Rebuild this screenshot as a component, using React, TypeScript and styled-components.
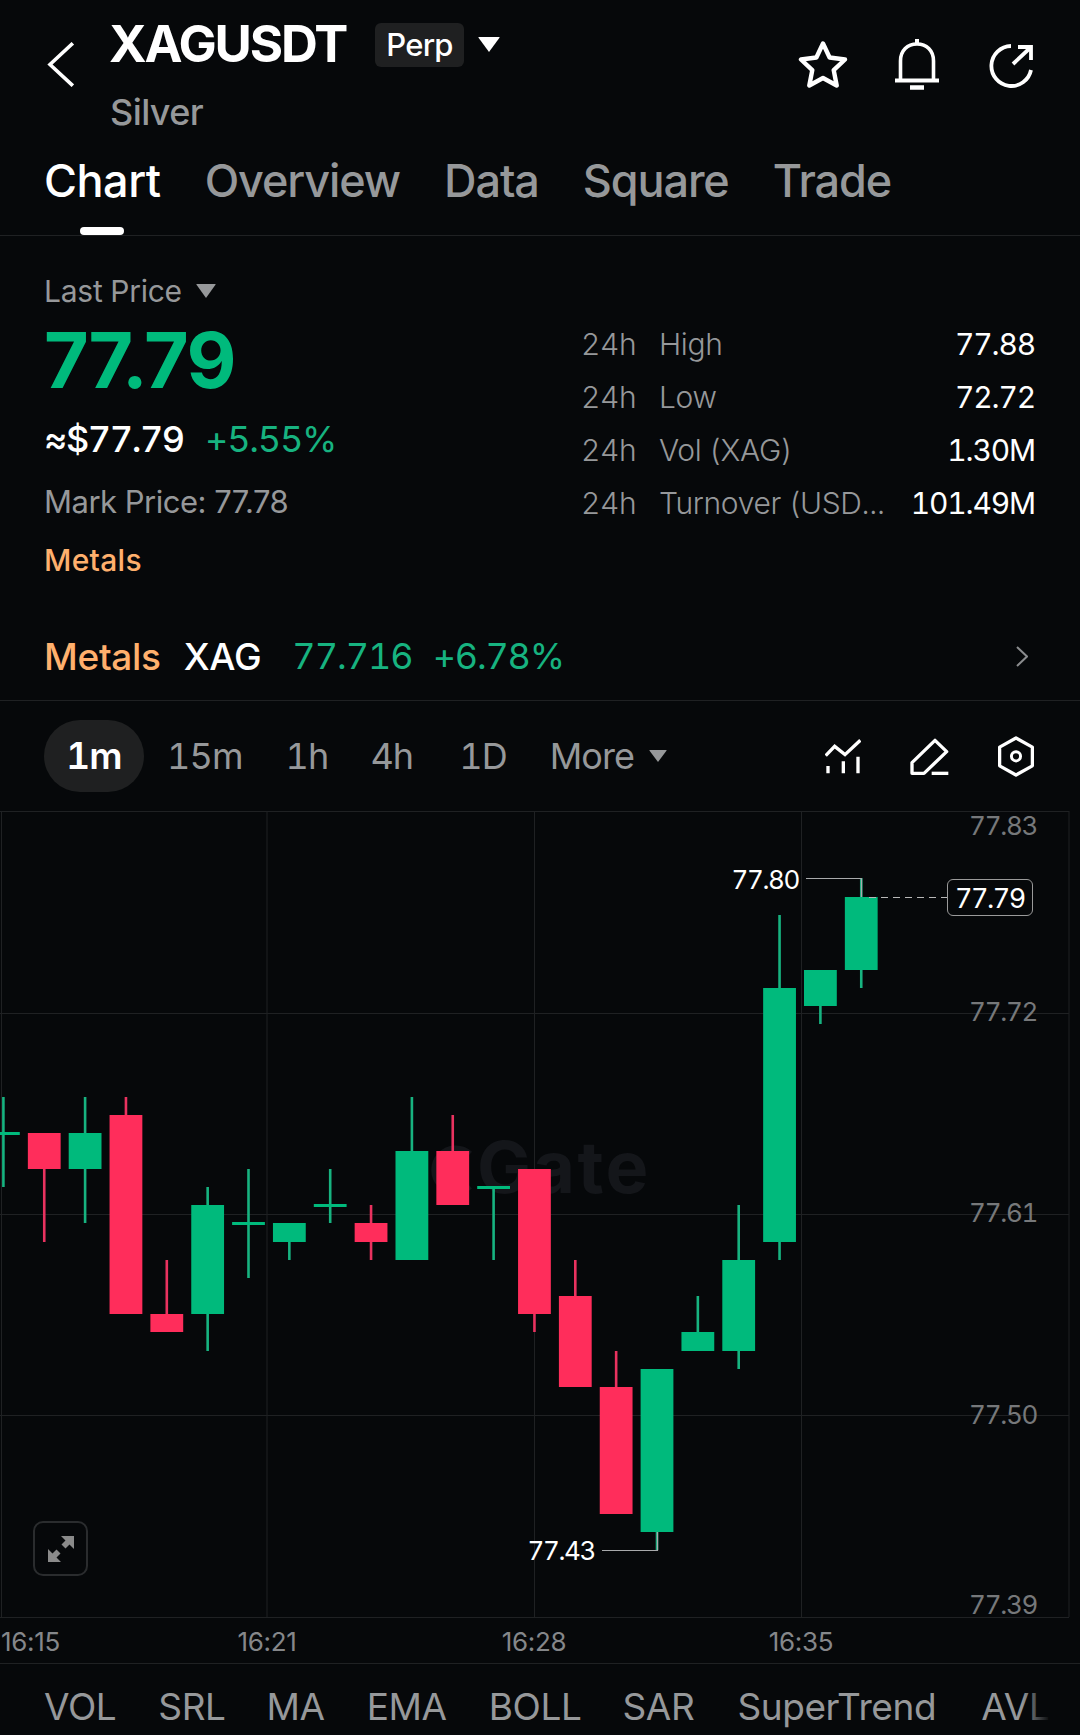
import React from "react";
import styled, { createGlobalStyle } from "styled-components";

const Global = createGlobalStyle`
  html, body { margin: 0; padding: 0; background: #06080a; }
  * { box-sizing: border-box; }
`;

const GREEN = "#00ba7c";
const GREEN_W = "#17b380";
const RED = "#ff2d5b";
const RED_W = "#e9325f";
const GRAY = "#96989a";
const LINE = "#1f2123";

const Page = styled.div`
  width: 1080px;
  height: 1735px;
  overflow: hidden;
  background: #06080a;
  color: #fff;
  font-family: Inter, "Liberation Sans", sans-serif;
  font-variant-numeric: tabular-nums;
  display: flex;
  flex-direction: column;
`;

const Header = styled.header`
  height: 130px;
  padding: 20px 47px 0 47px;
  display: flex;
  align-items: flex-start;
`;
const BackBtn = styled.svg`
  width: 27px;
  height: 45px;
  margin: 22px 36px 0 0;
  flex: none;
`;
const TitleCol = styled.div`
  display: flex;
  flex-direction: column;
`;
const TitleRow = styled.div`
  display: flex;
  align-items: center;
  height: 46px;
`;
const Title = styled.h1`
  margin: 2px 0 0 -1px;
  font-size: 51px;
  line-height: 46px;
  font-weight: 700;
  letter-spacing: -2.1px;
  width: 266px;
`;
const Tag = styled.span`
  width: 89px;
  height: 44px;
  margin-top: 4px;
  border-radius: 6px;
  background: #1f2021;
  font-size: 31px;
  line-height: 44px;
  font-weight: 500;
  letter-spacing: -0.7px;
  text-align: center;
`;
const Caret = styled.span<{ $w: number; $h: number; $c: string }>`
  flex: none;
  width: 0;
  height: 0;
  border-left: ${(p) => p.$w / 2}px solid transparent;
  border-right: ${(p) => p.$w / 2}px solid transparent;
  border-top: ${(p) => p.$h}px solid ${(p) => p.$c};
  border-radius: 1px;
`;
const TitleCaret = styled(Caret)`
  margin: 3px 0 0 14px;
`;
const Sub = styled.div`
  margin-top: 28px;
  font-size: 36px;
  line-height: 36px;
  font-weight: 500;
  color: ${GRAY};
  letter-spacing: -0.6px;
`;
const HeadIcons = styled.div`
  margin: 19px 0 0 auto;
  display: flex;
  align-items: flex-start;
`;
const HeadIcon = styled.svg<{ $ml: number; $mt: number }>`
  display: block;
  margin-left: ${(p) => p.$ml}px;
  margin-top: ${(p) => p.$mt}px;
`;

const Tabs = styled.nav`
  height: 106px;
  padding: 26px 0 0 44px;
  display: flex;
  border-bottom: 1px solid ${LINE};
`;
const Tab = styled.div<{ $active?: boolean }>`
  position: relative;
  height: 79px;
  margin-right: 44px;
  font-size: 45px;
  line-height: 50px;
  font-weight: 500;
  letter-spacing: ${(p) => (p.$active ? "-0.5px" : "-1.1px")};
  color: ${(p) => (p.$active ? "#fff" : GRAY)};
  ${(p) =>
    p.$active &&
    `&::after { content: ""; position: absolute; left: 36px; bottom: 0; width: 44px; height: 8px; border-radius: 4px; background: #fff; }`}
`;

const Stats = styled.section`
  height: 376px;
  display: flex;
`;
const Left = styled.div`
  width: 537px;
  padding: 35px 0 0 44px;
`;
const LastRow = styled.div`
  display: flex;
  align-items: center;
  height: 40px;
  font-size: 30px;
  color: ${GRAY};
  letter-spacing: -0.25px;
  font-weight: 400;
`;
const LastCaret = styled(Caret)`
  margin-left: 14px;
`;
const Price = styled.div`
  margin-top: 9px;
  font-size: 77px;
  line-height: 80px;
  font-weight: 700;
  font-variant-numeric: normal;
  letter-spacing: -1.7px;
  color: ${GREEN};
`;
const ApproxRow = styled.div`
  margin-top: 19px;
  display: flex;
  font-size: 36px;
  line-height: 40px;
`;
const Approx = styled.span`
  width: 161px;
  font-weight: 500;
  letter-spacing: -1.4px;
`;
const Pct = styled.span`
  color: ${GREEN_W};
  letter-spacing: -1.2px;
`;
const Mark = styled.div`
  margin-top: 23px;
  font-size: 31px;
  line-height: 40px;
  color: ${GRAY};
  font-variant-numeric: normal;
  letter-spacing: -0.5px;
  font-weight: 400;
`;
const MetalsTag = styled.div`
  margin-top: 18px;
  font-size: 30px;
  line-height: 40px;
  color: #ffb06d;
  font-weight: 500;
  letter-spacing: 0.3px;
`;
const Right = styled.div`
  flex: 1;
  padding: 81px 45px 0 44px;
`;
const StatRow = styled.div`
  height: 53px;
  display: flex;
  align-items: center;
  font-size: 30px;
  color: ${GRAY};
  letter-spacing: -0.35px;
  font-weight: 300;
`;
const Period = styled.span`
  width: 78px;
  flex: none;
`;
const StatLabel = styled.span`
  flex: 1;
  white-space: nowrap;
`;
const StatValue = styled.span`
  color: #fff;
  font-weight: 400;
  letter-spacing: -1.15px;
`;

const Ticker = styled.div`
  height: 89px;
  padding: 0 52px 0 44px;
  display: flex;
  align-items: center;
  border-bottom: 1px solid ${LINE};
  font-size: 37px;
  letter-spacing: -0.3px;
`;
const TickMetals = styled.span`
  color: #ffb06d;
  font-weight: 500;
  margin-right: 23px;
`;
const TickName = styled.span`
  font-weight: 500;
  margin-right: 31px;
`;
const TickPrice = styled.span`
  color: ${GREEN_W};
  font-size: 36px;
  letter-spacing: -1px;
  margin-right: 20px;
`;
const TickPct = styled.span`
  color: ${GREEN_W};
  font-size: 36px;
  letter-spacing: -1.2px;
`;
const TickChevron = styled.svg`
  margin-left: auto;
`;

const TimeBar = styled.div`
  height: 110px;
  padding: 0 46px 0 44px;
  display: flex;
  align-items: center;
`;
const Pill = styled.div`
  width: 100px;
  height: 72px;
  border-radius: 36px;
  background: #1f2021;
  font-size: 37px;
  line-height: 72px;
  text-align: center;
  font-weight: 600;
  letter-spacing: -0.8px;
`;
const TF = styled.div<{ $ml: number }>`
  margin-left: ${(p) => p.$ml}px;
  font-size: 36px;
  color: ${GRAY};
  letter-spacing: -0.9px;
`;
const TFCaret = styled(Caret)`
  margin-left: 15px;
`;
const TFIcons = styled.div`
  margin-left: auto;
  display: flex;
  align-items: center;
`;
const TFIcon = styled.svg<{ $ml: number }>`
  margin-left: ${(p) => p.$ml}px;
  display: block;
`;

const Chart = styled.div`
  position: relative;
  height: 807px;
`;
const ChartSvg = styled.svg`
  position: absolute;
  inset: 0;
`;
const Watermark = styled.div`
  position: absolute;
  left: 477px;
  top: 320px;
  font-size: 72px;
  line-height: 72px;
  font-weight: 700;
  letter-spacing: 2.3px;
  color: #14161a;
`;
const WatermarkLogo = styled.svg`
  position: absolute;
  left: 431px;
  top: 334px;
`;
const AxisPrice = styled.div<{ $top: number }>`
  position: absolute;
  right: 43px;
  top: ${(p) => p.$top}px;
  font-size: 26px;
  line-height: 30px;
  color: #76787a;
  letter-spacing: -1.3px;
`;
const ExtremeLabel = styled.div<{ $top: number; $right: number }>`
  position: absolute;
  right: ${(p) => p.$right}px;
  top: ${(p) => p.$top}px;
  font-size: 26px;
  line-height: 30px;
  color: #fff;
  letter-spacing: -1.4px;
`;
const LastTag = styled.div`
  position: absolute;
  left: 947px;
  top: 68px;
  width: 86px;
  height: 37px;
  border: 1px solid #9a9a9a;
  border-radius: 6px;
  background: #06080a;
  font-size: 27px;
  line-height: 37px;
  text-align: center;
  letter-spacing: -1.5px;
`;
const Expand = styled.div`
  position: absolute;
  left: 33px;
  top: 710px;
  width: 55px;
  height: 55px;
  border: 2px solid #2a2c2e;
  border-radius: 10px;
  display: flex;
  align-items: center;
  justify-content: center;
`;

const TimeAxis = styled.div`
  position: relative;
  height: 46px;
  border-bottom: 1px solid ${LINE};
`;
const TimeLabel = styled.div<{ $x: number; $edge?: boolean }>`
  position: absolute;
  left: ${(p) => p.$x}px;
  top: 9px;
  transform: ${(p) => (p.$edge ? "none" : "translateX(-50%)")};
  font-size: 26px;
  line-height: 30px;
  color: #85878a;
  font-variant-numeric: normal;
  letter-spacing: -0.3px;
`;

const Indicators = styled.div`
  flex: 1;
  position: relative;
  padding: 21px 0 0 44px;
  display: flex;
  font-size: 37px;
  line-height: 44px;
  color: ${GRAY};
  letter-spacing: -0.4px;
  white-space: nowrap;
  overflow: hidden;
  &::after {
    content: "";
    position: absolute;
    top: 0;
    bottom: 0;
    left: 1022px;
    width: 28px;
    background: linear-gradient(90deg, rgba(6, 8, 10, 0), #06080a);
  }
`;
const Ind = styled.span<{ $mr: number }>`
  margin-right: ${(p) => p.$mr}px;
`;

type C = { i: number; g: boolean; wt?: number; t: number; b: number; wb?: number };
const candles: C[] = [
  { i: 0, g: true, wt: 1097, t: 1132, b: 1135, wb: 1187 },
  { i: 1, g: false, t: 1133, b: 1169, wb: 1242 },
  { i: 2, g: true, wt: 1097, t: 1133, b: 1169, wb: 1223 },
  { i: 3, g: false, wt: 1097, t: 1115, b: 1314 },
  { i: 4, g: false, wt: 1260, t: 1314, b: 1332 },
  { i: 5, g: true, wt: 1187, t: 1205, b: 1314, wb: 1351 },
  { i: 6, g: true, wt: 1169, t: 1222, b: 1225, wb: 1278 },
  { i: 7, g: true, t: 1223, b: 1242, wb: 1260 },
  { i: 8, g: true, wt: 1169, t: 1204, b: 1207, wb: 1223 },
  { i: 9, g: false, wt: 1205, t: 1223, b: 1242, wb: 1260 },
  { i: 10, g: true, wt: 1097, t: 1151, b: 1260 },
  { i: 11, g: false, wt: 1115, t: 1151, b: 1205 },
  { i: 12, g: true, t: 1186, b: 1189, wb: 1260 },
  { i: 13, g: false, t: 1169, b: 1314, wb: 1332 },
  { i: 14, g: false, wt: 1260, t: 1296, b: 1387 },
  { i: 15, g: false, wt: 1351, t: 1387, b: 1514 },
  { i: 16, g: true, t: 1369, b: 1532, wb: 1550 },
  { i: 17, g: true, wt: 1296, t: 1332, b: 1351 },
  { i: 18, g: true, wt: 1205, t: 1260, b: 1351, wb: 1369 },
  { i: 19, g: true, wt: 915, t: 988, b: 1242, wb: 1260 },
  { i: 20, g: true, t: 970, b: 1006, wb: 1024 },
  { i: 21, g: true, wt: 878, t: 897, b: 970, wb: 988 },
];
const OY = 811;
const cx = (i: number) => 3.4 + 40.85 * i;

const priceLabels = [
  { t: "77.83", top: 811 },
  { t: "77.72", top: 997 },
  { t: "77.61", top: 1198 },
  { t: "77.50", top: 1400 },
  { t: "77.39", top: 1590 },
];

export default function App() {
  return (
    <Page>
      <Global />
      <Header>
        <BackBtn viewBox="0 0 27 45" fill="none" stroke="#fff" strokeWidth="3.6" strokeLinecap="square">
          <path d="M24.5 2.5 3 22.5l21.5 20" />
        </BackBtn>
        <TitleCol>
          <TitleRow>
            <Title>XAGUSDT</Title>
            <Tag>Perp</Tag>
            <TitleCaret $w={22} $h={15} $c="#fff" />
          </TitleRow>
          <Sub>Silver</Sub>
        </TitleCol>
        <HeadIcons>
          <HeadIcon $ml={0} $mt={1} width="50" height="50" viewBox="0 0 50 50" fill="none" stroke="#fff" strokeWidth="4.4" strokeLinejoin="round">
            <path d="M25 3.5l6.6 14 15.4 2-11.3 10.6 3 15.4L25 38l-13.7 7.5 3-15.4L3 19.5l15.4-2z" />
          </HeadIcon>
          <HeadIcon $ml={47} $mt={0} width="44" height="51" viewBox="0 0 44 51" fill="none" stroke="#fff" strokeWidth="3.6">
            <path d="M5.5 41V22C5.5 11.5 12.5 5 22 5s16.5 6.5 16.5 17v19" />
            <path d="M0 41.5h44" strokeWidth="4" />
            <path d="M22 0v5" strokeWidth="4" />
            <path d="M15 48.5h14" strokeWidth="4.5" />
          </HeadIcon>
          <HeadIcon $ml={50} $mt={5} width="44" height="44" viewBox="0 0 44 44" fill="none" stroke="#fff" strokeWidth="3.8">
            <path d="M42 26A20 20 0 1 1 22 2" />
            <path d="M24 20 41 4" />
            <path d="M29 3h13v13" />
          </HeadIcon>
        </HeadIcons>
      </Header>
      <Tabs>
        <Tab $active>Chart</Tab>
        <Tab>Overview</Tab>
        <Tab>Data</Tab>
        <Tab>Square</Tab>
        <Tab>Trade</Tab>
      </Tabs>
      <Stats>
        <Left>
          <LastRow>
            Last Price
            <LastCaret $w={20} $h={14} $c={GRAY} />
          </LastRow>
          <Price>77.79</Price>
          <ApproxRow>
            <Approx>≈$77.79</Approx>
            <Pct>+5.55%</Pct>
          </ApproxRow>
          <Mark>Mark Price: 77.78</Mark>
          <MetalsTag>Metals</MetalsTag>
        </Left>
        <Right>
          <StatRow>
            <Period>24h</Period>
            <StatLabel>High</StatLabel>
            <StatValue>77.88</StatValue>
          </StatRow>
          <StatRow>
            <Period>24h</Period>
            <StatLabel>Low</StatLabel>
            <StatValue>72.72</StatValue>
          </StatRow>
          <StatRow>
            <Period>24h</Period>
            <StatLabel>Vol (XAG)</StatLabel>
            <StatValue>1.30M</StatValue>
          </StatRow>
          <StatRow>
            <Period>24h</Period>
            <StatLabel>Turnover (USD...</StatLabel>
            <StatValue>101.49M</StatValue>
          </StatRow>
        </Right>
      </Stats>
      <Ticker>
        <TickMetals>Metals</TickMetals>
        <TickName>XAG</TickName>
        <TickPrice>77.716</TickPrice>
        <TickPct>+6.78%</TickPct>
        <TickChevron width="12" height="21" viewBox="0 0 12 21" fill="none" stroke="#8a8c8e" strokeWidth="2">
          <path d="M1 1l10 9.5-10 9.5" />
        </TickChevron>
      </Ticker>
      <TimeBar>
        <Pill>1m</Pill>
        <TF $ml={23}>15m</TF>
        <TF $ml={43}>1h</TF>
        <TF $ml={42}>4h</TF>
        <TF $ml={46}>1D</TF>
        <TF $ml={43}>More</TF>
        <TFCaret $w={18} $h={12} $c={GRAY} />
        <TFIcons>
          <TFIcon $ml={0} width="36" height="36" viewBox="378 352 108 108" fill="none" stroke="#fff" strokeWidth="10">
            <path d="M380 405l27-28 31 25 46-43" />
            <path d="M387 458v-22M433 458v-36M477 458v-50" />
          </TFIcon>
          <TFIcon $ml={49} width="39" height="37" viewBox="632 348 117 111" fill="none" stroke="#fff" strokeWidth="10" strokeLinejoin="round">
            <path d="M638 454v-32l69-67 35 34-68 65z" />
            <path d="M697 454h50" />
          </TFIcon>
          <TFIcon $ml={49} width="36" height="41" viewBox="893 347 110 123" fill="none" stroke="#fff" strokeWidth="10" strokeLinejoin="round">
            <path d="M948 352l50 28v57l-50 28-50-28v-57z" />
            <circle cx="948" cy="408" r="14" strokeWidth="9" />
          </TFIcon>
        </TFIcons>
      </TimeBar>
      <Chart>
        <Watermark>Gate</Watermark>
        <WatermarkLogo width="44" height="50" viewBox="0 0 44 50" fill="none" stroke="#14161a" strokeWidth="9">
          <path d="M38 10A20 20 0 1 0 38 40" />
        </WatermarkLogo>
        <ChartSvg width="1080" height="807" viewBox="0 0 1080 807">
          <g stroke={LINE} strokeWidth="1">
            <path d="M0 .5H1069M0 202.5H1069M0 403.5H1069M0 604.5H1069M0 806.5H1069" />
            <path d="M1.5 0V806M267 0V806M534.5 0V806M801.5 0V806M1069 0V806" />
          </g>
          {candles.map((c) => {
            const x = cx(c.i);
            return (
              <g key={c.i}>
                {c.wt !== undefined && (
                  <rect x={x - 1.3} y={c.wt - OY} width="2.6" height={c.t - c.wt} fill={c.g ? GREEN_W : RED_W} />
                )}
                {c.wb !== undefined && (
                  <rect x={x - 1.3} y={c.b - OY} width="2.6" height={c.wb - c.b} fill={c.g ? GREEN_W : RED_W} />
                )}
                <rect x={x - 16.4} y={c.t - OY} width="32.8" height={c.b - c.t} fill={c.g ? GREEN : RED} />
              </g>
            );
          })}
          <path d="M806 67.5H861.5V86" fill="none" stroke="#a8aaac" strokeWidth="1.2" />
          <path d="M602 739.5H657.5V721" fill="none" stroke="#a8aaac" strokeWidth="1.2" />
          <path d="M869 86.5H947" fill="none" stroke="#b8b8b8" strokeWidth="1.2" strokeDasharray="7 5" />
        </ChartSvg>
        {priceLabels.map((l) => (
          <AxisPrice key={l.t} $top={l.top - OY}>
            {l.t}
          </AxisPrice>
        ))}
        <ExtremeLabel $top={54} $right={281}>77.80</ExtremeLabel>
        <ExtremeLabel $top={725} $right={485}>77.43</ExtremeLabel>
        <LastTag>77.79</LastTag>
        <Expand>
          <svg width="26" height="26" viewBox="0 0 26 26" fill="#8a8a8a">
            <path d="M13 0h13v13l-4.5-4.5-4 4-4-4 4-4z" />
            <path d="M0 26V13l4.5 4.5 4-4 4 4-4 4L13 26z" />
          </svg>
        </Expand>
      </Chart>
      <TimeAxis>
        <TimeLabel $x={1} $edge>16:15</TimeLabel>
        <TimeLabel $x={267}>16:21</TimeLabel>
        <TimeLabel $x={534}>16:28</TimeLabel>
        <TimeLabel $x={801}>16:35</TimeLabel>
      </TimeAxis>
      <Indicators>
        <Ind $mr={42}>VOL</Ind>
        <Ind $mr={41}>SRL</Ind>
        <Ind $mr={42}>MA</Ind>
        <Ind $mr={42}>EMA</Ind>
        <Ind $mr={41}>BOLL</Ind>
        <Ind $mr={43}>SAR</Ind>
        <Ind $mr={45}>SuperTrend</Ind>
        <Ind $mr={0}>AVL</Ind>
      </Indicators>
    </Page>
  );
}
